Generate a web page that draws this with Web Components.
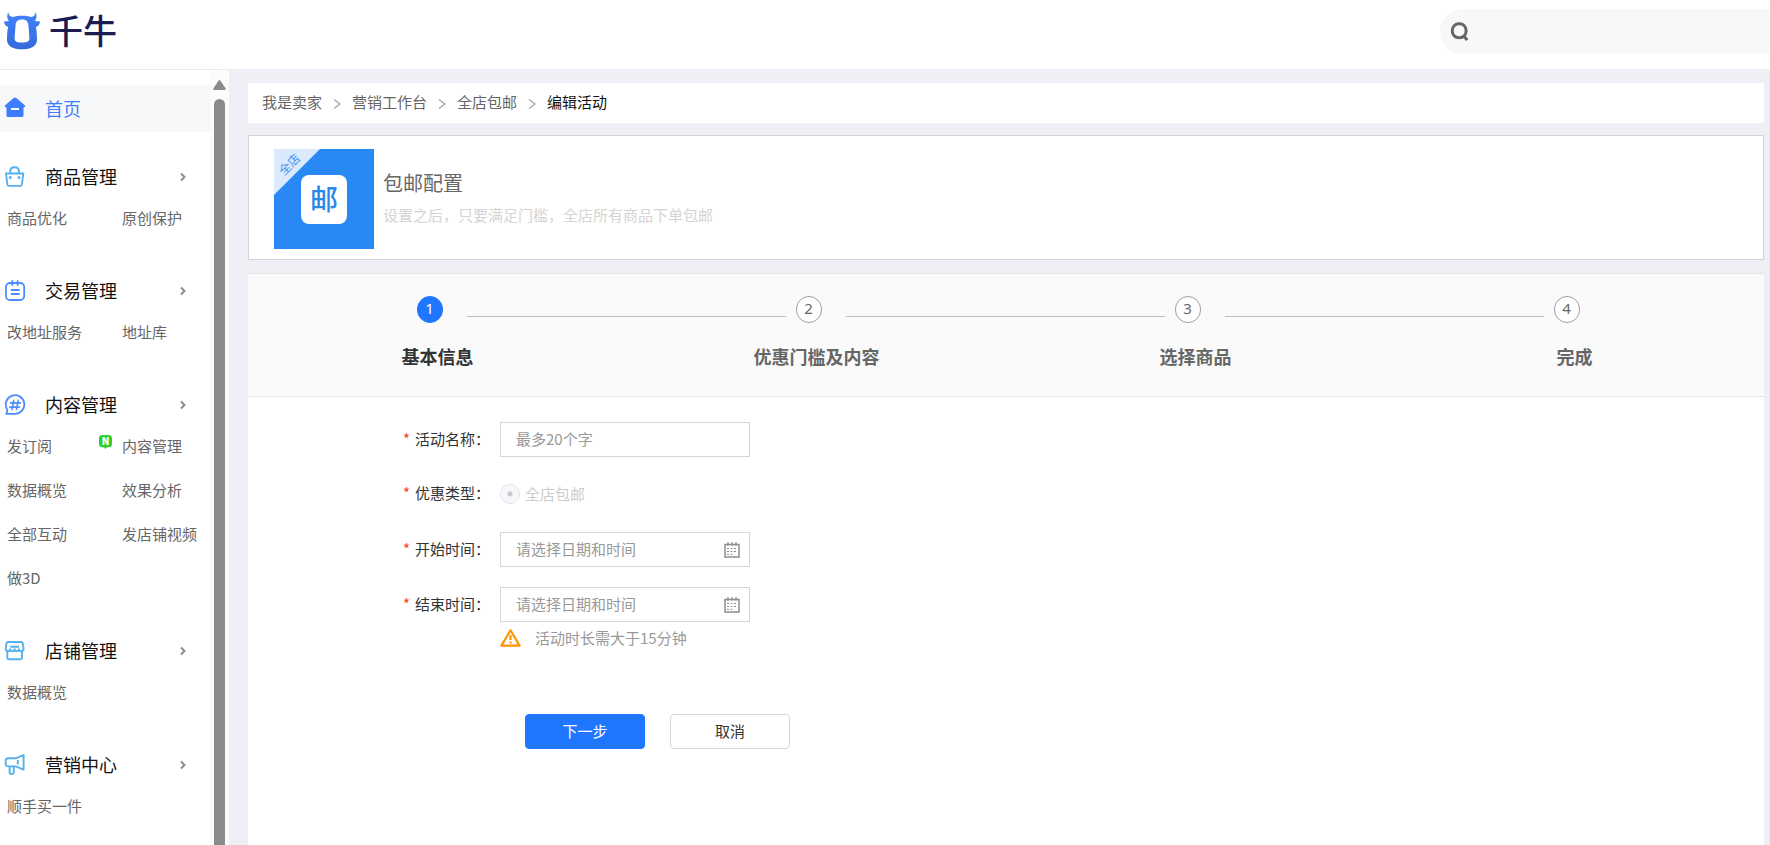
<!DOCTYPE html>
<html lang="zh-CN">
<head>
<meta charset="utf-8">
<meta name="viewport" content="width=device-width, initial-scale=1">
<title>千牛 - 编辑活动</title>
<style>
  html, body { height: 100%; margin: 0; }
  body {
    font-family: "Noto Sans CJK SC", sans-serif;
    font-size: 15px;
    color: #333;
    background: #eeeff4;
  }
</style>
</head>
<body>
<qn-app></qn-app>
<script>
const ICONS = {
  home: `<svg width="22" height="22" viewBox="0 0 22 22"><path d="M9.600 1 1.200 8.300c-.9.9-.3 2 .7 2h.6v7.900c0 1.200.7 1.900 1.900 1.900h13.200c1.200 0 1.900-.7 1.900-1.900v-7.900h.6c1.100 0 1.600-1.200.7-2L12.400 1c-.9-.8-1.900-.8-2.800 0z" fill="#3d7dfd"/><path d="M7 12h8" stroke="#fff" stroke-width="2"/></svg>`,
  bag: `<svg width="22" height="22" viewBox="0 0 22 22" fill="none" stroke="#55b0ee" stroke-width="1.900"><path d="M2 7.500h17.300l-1.400 11c-.1.900-.7 1.400-1.600 1.400H5c-.9 0-1.500-.5-1.600-1.400zM6.200 7V5.500c0-2.500 1.800-4.300 4.400-4.300s4.400 1.800 4.400 4.300V7"/><circle cx="6.300" cy="11.500" r=".6"/><circle cx="15" cy="11.500" r=".6"/></svg>`,
  order: `<svg width="22" height="22" viewBox="0 0 22 22" fill="none" stroke="#4c8dfb" stroke-width="1.800" stroke-linecap="round"><rect x="2" y="3" width="18.200" height="17" rx="4"/><path d="M8.300 1v4M13.600 1v4M7.500 10h7.500M7.500 14h7.500"/></svg>`,
  hash: `<svg width="22" height="22" viewBox="0 0 22 22" fill="none" stroke="#4c8dfb" stroke-width="1.800" stroke-linecap="round" stroke-linejoin="round"><path d="M3 15.200A9.300 9.300 0 1 1 11.200 19.800H2.200c1-1.300 1.300-2.800.8-4.600z"/><path d="M9.700 6.300 8 15.500M14.200 6.300l-1.700 9.200M6.600 8.900h9.700M5.800 13.100h9.700" stroke-width="1.600"/></svg>`,
  shop: `<svg width="22" height="22" viewBox="0 0 22 22" fill="none" stroke="#55b0ee" stroke-width="1.900" stroke-linejoin="round"><path d="M4 2h13.200c.9 0 1.300.4 1.500 1.200l.9 5.400c0 1.600-1 2.600-2.400 2.600-1.300 0-2.200-.7-2.300-1.900-.2 1.200-1 1.900-2.200 1.900s-2-.7-2.100-1.900c-.1 1.200-1 1.900-2.100 1.900s-2-.7-2.200-1.900C6.100 10.500 5.200 11.200 4 11.200c-1.500 0-2.400-1-2.400-2.600l.9-5.400C2.700 2.400 3.100 2 4 2zM3.300 11.500V18c0 .8.400 1.200 1.200 1.200h12.200c.8 0 1.200-.4 1.200-1.200v-6.500M6.300 6.800h8.700"/></svg>`,
  horn: `<svg width="22" height="22" viewBox="0 0 22 22" fill="none" stroke="#55b0ee" stroke-width="1.900" stroke-linejoin="round"><path d="M4.600 4.300h7.200L19.600 1v14.600l-7.800-3.200H4.600c-1.700 0-3-1.200-3-2.600V6.900c0-1.400 1.300-2.600 3-2.600zM5.600 12.600v5.600c0 2.400 4.200 2.400 4.200 0v-5.600M13.800 6v4.500"/></svg>`,
  calendar: `<svg width="16" height="16" viewBox="0 0 16 16" fill="none" stroke="#8f8f8f"><rect x="1" y="2.500" width="14" height="12.500" stroke-width="1.500"/><path d="M4 .3v3.400M8 .3v3.400M12 .3v3.400" stroke-width="1.500"/><path d="M3 6.500h10M3 9.500h10M3 12.300h7" stroke-dasharray="2 1.500"/></svg>`,
  search: `<svg width="20" height="20" viewBox="0 0 20 20" fill="none" stroke="#666" stroke-width="3"><rect x="2.300" y="1.800" width="13.800" height="14" rx="6.500"/><path d="m14 14.500 3.300 3.600"/></svg>`,
  warn: `<svg width="21" height="18" viewBox="0 0 21 18" fill="none" stroke="#ff9500" stroke-width="2.200" stroke-linejoin="round"><path d="M10.500 1.200 19.600 16.600H1.400z"/><path d="M10.500 6v5M10.500 12.500v2"/></svg>`,
  crumb: `<svg width="8" height="16" viewBox="0 0 8 16" fill="none" stroke="#a0a2ad" stroke-width="1.200"><path d="m1 5.500 6 4.500-6 4.500"/></svg>`,
  chevron: `<svg width="6" height="10" viewBox="0 0 6 10" fill="none" stroke="#8c8c8c" stroke-width="2"><path d="m1 1.500 3.500 3.500L1 8.500"/></svg>`,
  bull: `<svg width="38" height="38" viewBox="0 0 38 38"><defs><linearGradient id="g" x2="0" y2="1"><stop stop-color="#4082fb"/><stop offset="1" stop-color="#356bdc"/></linearGradient></defs><path fill="url(#g)" fill-rule="evenodd" d="M5.300 0c-1.200 2.700-1.400 5-.6 6.900.3.900.8 1.600 1.600 2L1 9.500c.3 3.200 2 5 4.100 5.400C4.300 18.500 4 23 4 28c0 6 6 9.300 15 9.300S34 34 34 28c0-5-.3-9.500-1.100-13.100 2.400-.4 3.900-2.300 4.100-5.400l-5.300-.6c2.200-2 2.400-5.500 1-8.900-.3 2.900-1.700 4.600-4.600 5C25.500 4.200 22.500 3.800 19 3.800s-6.500.4-9.100 1.200C7 4.600 5.500 2.900 5.300 0zM19 7.500c-4.200 0-6 1.800-6.400 5.500l-1 12.500C11.300 29 13 30.600 19 30.600s7.700-1.600 7.400-5.100l-1-12.500C25 9.300 23.200 7.500 19 7.500z"/></svg>`,
  badge: `<svg width="13" height="14" viewBox="0 0 13 14"><path d="M3.500 0h6C12 0 13 1.200 13 3.500v5.300c0 2.400-1 3.500-3.500 3.500H8L6.500 14 5 12.300H3.500C1 12.300 0 11.200 0 8.800V3.500C0 1.200 1 0 3.500 0z" fill="#2fd02f"/></svg>`
};

/* Shared base: each element supplies its css and markup. */
class QnElement extends HTMLElement {
  connectedCallback() {
    if (this.shadowRoot) return;
    const root = this.attachShadow({ mode: 'open' });
    const tpl = document.createElement('template');
    tpl.innerHTML = `<style>*{box-sizing:border-box}svg{display:block}a{color:inherit;text-decoration:none}ul,ol{list-style:none;margin:0;padding:0}${this.css()}</style>${this.html()}`;
    root.append(tpl.content.cloneNode(true));
  }
}

customElements.define('qn-icon', class extends QnElement {
  css() { return `:host{display:block;flex:none}`; }
  html() { return ICONS[this.getAttribute('name')]; }
});

customElements.define('qn-header', class extends QnElement {
  css() { return `
    :host{display:block;background:#fff}
    header{display:flex;justify-content:space-between;height:69px;padding:9px 0 0 3px}
    .logo{display:flex;gap:8px;height:43px;align-items:center;font-size:34px;line-height:42px;font-weight:500;color:#1b1d52}
    .logo span{padding-bottom:2px}
    .search{display:flex;align-items:center;gap:8px;width:330px;height:45px;padding-left:10px;border-radius:23px 0 0 23px;background:#f7f8fa}
    input{flex:1;min-width:0;border:0;outline:0;background:none;font:inherit}`; }
  html() { return `<header>
    <a class="logo" href="#"><qn-icon name="bull"></qn-icon><span>千牛</span></a>
    <label class="search"><qn-icon name="search"></qn-icon><input type="search" aria-label="搜索"></label>
  </header>`; }
});

customElements.define('qn-nav-group', class extends QnElement {
  css() { return `
    :host{display:block;margin-bottom:32px}
    .head{display:flex;align-items:center;height:38px;padding:0 24px 1px 4px;font-size:18px;line-height:26px;color:#111}
    .head span{flex:1;margin-left:19px;padding-bottom:1px}`; }
  html() {
    return `<a class="head" href="#"><qn-icon name="${this.getAttribute('icon')}"></qn-icon><span>${this.getAttribute('label')}</span><qn-icon name="chevron"></qn-icon></a><slot></slot>`;
  }
});

customElements.define('qn-nav-links', class extends QnElement {
  css() { return `
    :host{display:block}
    ul{display:grid;grid-template-columns:115px 1fr;padding-left:7px}
    li{position:relative;line-height:44px;color:#666;white-space:nowrap}
    .new{position:absolute;left:-23px;top:11px;width:13px;height:14px;color:#fff;font-size:10px;font-weight:700;line-height:12px;text-align:center}
    .new qn-icon{position:absolute;inset:0}
    .new b{position:relative}`; }
  html() {
    const fresh = this.getAttribute('new');
    const links = this.getAttribute('links').split(',');
    return `<ul>${links.map(t => `<li>${t === fresh ? '<span class="new"><qn-icon name="badge"></qn-icon><b>N</b></span>' : ''}<a href="#">${t}</a></li>`).join('')}</ul>`;
  }
});

customElements.define('qn-sidebar', class extends QnElement {
  css() { return `
    :host{display:flex;background:#fff;border-top:1px solid #e9eaee;overflow:hidden}
    nav{width:210px;padding-top:15px}
    .home{display:flex;align-items:center;gap:19px;height:47px;padding:0 0 2px 4px;margin-bottom:26px;background:#f7f8fa;color:#3d7dfd;font-size:18px}
    .bar{display:flex;flex-direction:column;align-items:center;gap:9px;width:19px;padding-top:10px;background:#fcfcfc}
    .up{flex:none}
    .thumb{flex:1;width:11px;border-radius:6px 6px 0 0;background:#8b8b8b}`; }
  html() { return `<nav>
      <a class="home" href="#"><qn-icon name="home"></qn-icon>首页</a>
      <qn-nav-group icon="bag" label="商品管理"><qn-nav-links links="商品优化,原创保护"></qn-nav-links></qn-nav-group>
      <qn-nav-group icon="order" label="交易管理"><qn-nav-links links="改地址服务,地址库"></qn-nav-links></qn-nav-group>
      <qn-nav-group icon="hash" label="内容管理"><qn-nav-links new="内容管理" links="发订阅,内容管理,数据概览,效果分析,全部互动,发店铺视频,做3D"></qn-nav-links></qn-nav-group>
      <qn-nav-group icon="shop" label="店铺管理"><qn-nav-links links="数据概览"></qn-nav-links></qn-nav-group>
      <qn-nav-group icon="horn" label="营销中心"><qn-nav-links links="顺手买一件"></qn-nav-links></qn-nav-group>
    </nav>
    <div class="bar"><svg class="up" width="13" height="10" viewBox="0 0 13 10"><path d="M5.500.8.600 8C0 9 .3 10 1.500 10h10c1.200 0 1.500-1 .9-2L7.500.8C7-.2 6-.2 5.500.8z" fill="#8b8b8b"/></svg><div class="thumb"></div></div>`; }
});

customElements.define('qn-breadcrumb', class extends QnElement {
  css() { return `
    :host{display:block;background:#fff}
    ol{display:flex;align-items:center;height:40px;padding:0 0 3px 14px;color:#666}
    li{display:flex;align-items:center}
    li qn-icon{margin:0 11px}
    [aria-current]{color:#111}`; }
  html() {
    const items = this.getAttribute('items').split(',');
    return `<ol>${items.map((t, i) => i < items.length - 1
      ? `<li><a href="#">${t}</a><qn-icon name="crumb"></qn-icon></li>`
      : `<li aria-current="page">${t}</li>`).join('')}</ol>`;
  }
});

customElements.define('qn-banner', class extends QnElement {
  css() { return `
    :host{display:flex;gap:9px;padding:13px 25px 10px;height:125px;box-sizing:border-box;background:#fff;border:1px solid #d3d4d8}
    .art{position:relative;display:grid;place-items:center;width:100px;height:100px;background:linear-gradient(135deg,#dbe9fc 32px,#2889f5 33px)}
    .tile{width:46px;height:49px;border-radius:8px;background:#fff;color:#2b87ea;font-size:28px;line-height:46px;font-weight:500;text-align:center}
    .corner{position:absolute;left:3px;top:6px;font-size:12px;line-height:18px;color:#3c93ee;transform:rotate(-45deg)}
    .text{padding-top:19px}
    h1{margin:0;font-size:20px;line-height:30px;font-weight:400;color:#666}
    p{margin:0;line-height:34px;color:#d4d4d4}`; }
  html() { return `<div class="art"><span class="corner">全店</span><div class="tile">邮</div></div>
    <div class="text"><h1><slot name="title"></slot></h1><p><slot></slot></p></div>`; }
});

customElements.define('qn-steps', class extends QnElement {
  css() { return `
    :host{display:block;border:solid #e4e5e8;border-width:1px 0;background:#fafafa}
    ol{display:grid;grid-template-columns:repeat(4,1fr);height:122px;padding-top:22px}
    .head{display:flex;gap:24px;width:100%;margin-left:calc(50% - 21px)}
    .num{flex:none;width:26px;height:27px;border:1px solid #9d9eac;border-radius:13px;background:#fff;font-family:"Noto Sans",sans-serif;font-size:15px;line-height:23px;text-align:center;color:#666}
    .line{flex:1;height:1px;margin:20px 10px 0 0;background:#bcbdc8}
    li:last-child .head{width:26px}
    .label{margin-top:19px;font-size:18px;line-height:28px;font-weight:700;text-align:center;color:#666}
    .on .num{background:#1f76ff;border-color:#1f76ff;color:#fff}
    .on .label{color:#333}`; }
  html() {
    const items = this.getAttribute('items').split(',');
    return `<ol>${items.map((t, i) => `<li class="${i ? '' : 'on'}"><div class="head"><div class="num">${i + 1}</div>${i < items.length - 1 ? '<div class="line"></div>' : ''}</div><div class="label">${t}</div></li>`).join('')}</ol>`;
  }
});

customElements.define('qn-field', class extends QnElement {
  css() { return `
    :host{display:flex;height:35px;align-items:center}
    :host([type=radio]){padding-bottom:2px}
    .name{flex:none;width:97px;line-height:22px;padding-bottom:2px}
    .name i{margin-right:5px;font-style:normal;color:#ff3b14}
    .box{display:flex;align-items:center;width:250px;height:35px;padding:0 9px 0 15px;border:1px solid #d5d6da}
    input[type=text]{flex:1;min-width:0;padding:0 0 1px;border:0;outline:0;background:none;font:inherit;line-height:22px;color:#333}
    input::placeholder{color:#999;opacity:1}
    input[type=radio]{appearance:none;width:20px;height:20px;margin:0 5px 0 0;border:1px solid #e3e4ea;border-radius:50%;background:radial-gradient(circle,#c8c8cc 2px,#f6f7fa 3px)}
    .option{display:flex;align-items:center;color:#ccc}
    .option span{padding-bottom:1px}`; }
  html() {
    const label = this.getAttribute('label');
    if (this.getAttribute('type') === 'radio')
      return `<span class="name" id="n"><i>*</i>${label}：</span><label class="option"><input type="radio" aria-describedby="n" checked disabled><span>${this.getAttribute('option')}</span></label>`;
    return `<label class="name" for="f"><i>*</i>${label}：</label><div class="box"><input id="f" type="text" placeholder="${this.getAttribute('placeholder')}">${this.getAttribute('type') === 'date' ? '<qn-icon name="calendar"></qn-icon>' : ''}</div>`;
  }
});

customElements.define('qn-button', class extends QnElement {
  css() { return `
    :host{display:block}
    button{width:120px;height:35px;padding:0 0 2px;border:1px solid #d5d6da;border-radius:4px;background:#fff;color:#333;font:inherit;line-height:31px}
    :host([primary]) button{border-color:#1f76ff;background:#1f76ff;color:#fff}`; }
  html() { return `<button type="button"><slot></slot></button>`; }
});

customElements.define('qn-activity-form', class extends QnElement {
  css() { return `
    :host{display:block;padding:25px 155px}
    form{display:flex;flex-direction:column;gap:20px}
    .tip{display:flex;align-items:center;gap:14px;height:22px;margin:-15px 0 0 97px;color:#999}
    .tip span{padding-bottom:2px}
    .actions{display:flex;gap:25px;margin:45px 0 0 122px}`; }
  html() { return `<form>
    <qn-field label="活动名称" placeholder="最多20个字"></qn-field>
    <qn-field type="radio" label="优惠类型" option="全店包邮"></qn-field>
    <qn-field type="date" label="开始时间" placeholder="请选择日期和时间"></qn-field>
    <qn-field type="date" label="结束时间" placeholder="请选择日期和时间"></qn-field>
    <div class="tip"><qn-icon name="warn"></qn-icon><span>活动时长需大于15分钟</span></div>
    <div class="actions"><qn-button primary>下一步</qn-button><qn-button>取消</qn-button></div>
  </form>`; }
});

customElements.define('qn-app', class extends QnElement {
  css() { return `
    :host{display:grid;grid-template:auto minmax(0,1fr) / 229px minmax(0,1fr);height:100vh;overflow:hidden}
    qn-header{grid-column:1 / -1}
    main{display:flex;flex-direction:column;gap:12px;padding:14px 6px 0 19px}
    .panel{flex:1;background:#fff;margin-top:1px}`; }
  html() { return `<qn-header></qn-header><qn-sidebar></qn-sidebar>
    <main>
      <qn-breadcrumb items="我是卖家,营销工作台,全店包邮,编辑活动"></qn-breadcrumb>
      <qn-banner><span slot="title">包邮配置</span>设置之后，只要满足门槛，全店所有商品下单包邮</qn-banner>
      <section class="panel">
        <qn-steps items="基本信息,优惠门槛及内容,选择商品,完成"></qn-steps>
        <qn-activity-form></qn-activity-form>
      </section>
    </main>`; }
});
</script>
</body>
</html>
